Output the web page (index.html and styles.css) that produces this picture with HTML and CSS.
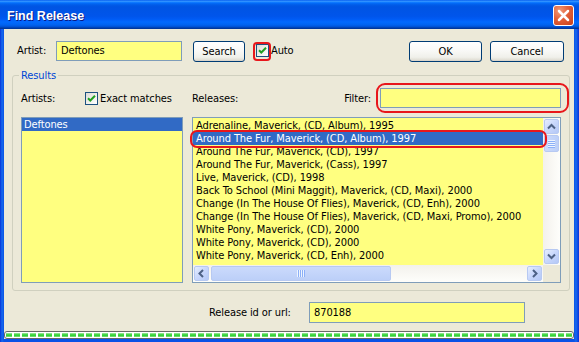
FILE: index.html
```html
<!DOCTYPE html>
<html>
<head>
<meta charset="utf-8">
<title>Find Release</title>
<link rel="stylesheet" href="styles.css">
</head>
<body>
<div class="window">
  <div class="titlebar">
    <span class="title">Find Release</span>
    <span class="close"><svg width="19" height="19" viewBox="0 0 19 19"><path d="M5 5 L14 14 M14 5 L5 14" stroke="#fff" stroke-width="2.5" stroke-linecap="round"/></svg></span>
  </div>
  <div class="client">
    <div class="toprow">
      <span class="lbl lbl-artist">Artist:</span>
      <span class="field field-artist">Deftones</span>
      <span class="btn btn-search">Search</span>
      <span class="auto">
        <span class="chk chk-auto"><svg width="11" height="11" viewBox="0 0 11 11"><path d="M2 5.2 L4.3 7.5 L9 2.8" fill="none" stroke="#21A121" stroke-width="2"/></svg><span class="hl hl-auto"></span></span>
        <span class="auto-text">Auto</span>
      </span>
      <span class="spacer"></span>
      <span class="btn btn-ok">OK</span>
      <span class="btn btn-cancel">Cancel</span>
    </div>

    <div class="group">
      <span class="legend">Results</span>
      <div class="ghead">
        <div class="ghead-left">
          <span class="lbl-artists">Artists:</span>
          <span class="chk"><svg width="11" height="11" viewBox="0 0 11 11"><path d="M2 5.2 L4.3 7.5 L9 2.8" fill="none" stroke="#21A121" stroke-width="2"/></svg></span>
          <span class="exact-text">Exact matches</span>
        </div>
        <div class="ghead-right">
          <span>Releases:</span>
          <span class="spacer"></span>
          <span>Filter:</span>
          <span class="filterwrap"><span class="field field-filter"></span><span class="hl hl-filter"></span></span>
        </div>
      </div>
      <div class="lists">
        <div class="list list-artists">
          <div class="art-row sel">Deftones</div>
        </div>
        <div class="list list-releases">
          <div class="rows">
            <div class="rel-row">Adrenaline, Maverick, (CD, Album), 1995</div>
            <div class="rel-row sel">Around The Fur, Maverick, (CD, Album), 1997<span class="hl hl-row"></span></div>
            <div class="rel-row">Around The Fur, Maverick, (CD), 1997</div>
            <div class="rel-row">Around The Fur, Maverick, (Cass), 1997</div>
            <div class="rel-row">Live, Maverick, (CD), 1998</div>
            <div class="rel-row">Back To School (Mini Maggit), Maverick, (CD, Maxi), 2000</div>
            <div class="rel-row">Change (In The House Of Flies), Maverick, (CD, Enh), 2000</div>
            <div class="rel-row">Change (In The House Of Flies), Maverick, (CD, Maxi, Promo), 2000</div>
            <div class="rel-row">White Pony, Maverick, (CD), 2000</div>
            <div class="rel-row">White Pony, Maverick, (CD), 2000</div>
            <div class="rel-row">White Pony, Maverick, (CD, Enh), 2000</div>
          </div>
          <div class="vscroll">
            <span class="sbtn"><svg width="13" height="13" viewBox="0 0 13 13"><path d="M3 8.5 L6.5 5 L10 8.5" fill="none" stroke="#4D6185" stroke-width="2"/></svg></span>
            <span class="vthumb"><span class="grip-h"></span></span>
            <span class="sbtn sbtn-down"><svg width="13" height="13" viewBox="0 0 13 13"><path d="M3 4.5 L6.5 8 L10 4.5" fill="none" stroke="#4D6185" stroke-width="2"/></svg></span>
          </div>
          <div class="hscroll">
            <span class="sbtn"><svg width="13" height="13" viewBox="0 0 13 13"><path d="M8 3 L4.5 6.5 L8 10" fill="none" stroke="#4D6185" stroke-width="2"/></svg></span>
            <span class="hthumb"><span class="grip-v"></span></span>
            <span class="sbtn sbtn-right"><svg width="13" height="13" viewBox="0 0 13 13"><path d="M5 3 L8.5 6.5 L5 10" fill="none" stroke="#4D6185" stroke-width="2"/></svg></span>
          </div>
          <div class="corner"></div>
        </div>
      </div>
    </div>

    <div class="idrow">
      <span class="lbl-id">Release id or url:</span>
      <span class="field field-id">870188</span>
    </div>
    <div class="progress"><div class="segs"></div></div>
  </div>
</div>
</body>
</html>
```
FILE: styles.css
```css
* { box-sizing: border-box; margin: 0; padding: 0; }
html, body { width: 579px; height: 342px; overflow: hidden; }
body {
  font-family: "DejaVu Sans Condensed", "DejaVu Sans", sans-serif;
  font-stretch: condensed;
  font-size: 11px;
  line-height: 13px;
  letter-spacing: -0.1px;
  color: #000;
  background: #ECE9D8;
}
.window {
  width: 579px;
  height: 342px;
  display: flex;
  flex-direction: column;
  background: linear-gradient(to right, #0831D9 0, #166AEE 2px, #0A52E6 4px, #0A52E6 574px, #166AEE 576px, #0831D9 579px);
}
.titlebar {
  height: 29px;
  flex: none;
  display: flex;
  align-items: flex-start;
  padding: 0 5px 0 7px;
  background: linear-gradient(to bottom, #0058EE 0%, #3593FF 4%, #288EFF 6%, #127DFF 8%, #036FFC 10%, #0262EE 14%, #0057E5 20%, #0054E3 24%, #0055EB 56%, #005BF5 66%, #026AFE 76%, #0062EF 86%, #0052D6 92%, #0040AB 96%, #003092 100%);
}
.title {
  flex: 1;
  margin-top: 8px;
  font-family: "Liberation Sans", Arial, sans-serif;
  font-stretch: normal;
  font-weight: bold;
  font-size: 12.5px;
  line-height: 16px;
  letter-spacing: 0;
  color: #fff;
  text-shadow: 1px 1px 0 #0A1883;
}
.close {
  margin-top: 5px;
  width: 21px;
  height: 21px;
  border: 1px solid #fff;
  border-radius: 3px;
  background: radial-gradient(circle at 30% 25%, #F09A78 0, #E2603A 45%, #C8401A 100%);
  display: flex;
  align-items: center;
  justify-content: center;
}
.client {
  flex: 1;
  margin: 0 5px 3px 4px;
  background: #ECE9D8;
  display: flex;
  flex-direction: column;
  padding-top: 12px;
}
.toprow {
  height: 21px;
  flex: none;
  display: flex;
  align-items: flex-start;
  padding: 0 10px 0 13px;
}
.spacer { flex: 1; }
.lbl-artist { width: 39px; line-height: 20px; }
.field {
  display: block;
  border: 1px solid #7F9DB9;
  background: #FFFF80;
  padding: 0 4px;
  white-space: nowrap;
}
.field-artist { width: 126px; height: 20px; line-height: 18px; }
.btn {
  display: block;
  height: 21px;
  border: 1px solid #003C74;
  border-radius: 3px;
  text-align: center;
  line-height: 19px;
  background: linear-gradient(to bottom, #FFFFFF 0%, #FAFAF8 40%, #F0F0EA 80%, #E3E1D8 92%, #D6D0C5 100%);
}
.btn-search { width: 52px; margin-left: 11px; }
.btn-ok { width: 73px; }
.btn-cancel { width: 74px; margin-left: 8px; }
.auto { display: flex; align-items: flex-start; margin-left: 11px; }
.auto-text { margin-left: 2px; line-height: 20px; }
.chk {
  position: relative;
  display: flex;
  align-items: center;
  justify-content: center;
  width: 13px;
  height: 13px;
  flex: none;
  border: 1px solid #1C5180;
  background: linear-gradient(135deg, #DCDCD7 0%, #F2F2EF 60%, #FFFFFF 100%);
}
.chk-auto { margin-top: 3px; }
.hl {
  position: absolute;
  border: 2px solid #E8161B;
  pointer-events: none;
}
.hl-auto { left: -4px; top: -3px; right: -3px; bottom: -5px; border-radius: 4px; }

.group {
  position: relative;
  flex: none;
  height: 216px;
  margin: 13px 4px 0 8px;
  border: 1px solid #D0D0BF;
  border-radius: 3px;
  padding: 12px 8px 7px 8px;
}
.legend {
  position: absolute;
  left: 6px;
  top: -7px;
  padding: 0 2px;
  background: #ECE9D8;
  color: #0046D5;
}
.ghead {
  display: grid;
  grid-template-columns: 162px 369px;
  column-gap: 9px;
  height: 20px;
}
.ghead-left, .ghead-right { display: flex; align-items: center; }
.lbl-artists { width: 64px; }
.exact-text { margin-left: 2px; }
.filterwrap { position: relative; margin-left: 9px; }
.field-filter { width: 181px; height: 20px; }
.hl-filter { left: -4px; top: -5px; right: -8px; bottom: -5px; border-radius: 9px; }

.lists {
  display: grid;
  grid-template-columns: 162px 369px;
  column-gap: 9px;
  height: 166px;
  margin-top: 9px;
}
.list {
  border: 1px solid #7F9DB9;
  background: #FFFF80;
}
.art-row { height: 13px; padding-left: 2px; white-space: nowrap; }
.sel { background: #316AC5; color: #fff; }
.list-releases {
  display: grid;
  grid-template-columns: 350px 17px;
  grid-template-rows: 147px 17px;
}
.rows { padding-top: 1px; }
.rel-row { position: relative; height: 13px; padding-left: 3px; white-space: nowrap; }
.hl-row { left: -3px; right: -4px; top: -2px; bottom: -3px; border-radius: 7px; z-index: 2; }

.vscroll {
  display: flex;
  flex-direction: column;
  background: linear-gradient(to right, #F3F1EC, #FEFEFB);
}
.hscroll {
  display: flex;
  flex-direction: row;
  background: linear-gradient(to bottom, #F3F1EC, #FEFEFB);
}
.corner { background: #ECE9D8; }
.sbtn {
  display: flex;
  align-items: center;
  justify-content: center;
  width: 15px;
  height: 15px;
  margin: 1px;
  flex: none;
  border: 1px solid #B7C9F2;
  border-radius: 2px;
  background: linear-gradient(135deg, #E6EEFE 0%, #C8D7FC 50%, #B4C8F6 100%);
}
.sbtn-down { margin-top: auto; }
.sbtn-right { margin-left: auto; }
.vthumb, .hthumb {
  display: flex;
  align-items: center;
  justify-content: center;
  flex: none;
  border: 1px solid #B7C9F2;
  border-radius: 2px;
  background: linear-gradient(to right, #CBDAFC, #BCCFF8);
}
.vthumb { width: 15px; height: 17px; margin: 0 1px; }
.hthumb {
  width: 180px;
  height: 15px;
  margin: 1px 0 1px 1px;
  background: linear-gradient(to bottom, #CBDAFC, #BCCFF8);
}
.grip-h {
  width: 7px;
  height: 8px;
  background: repeating-linear-gradient(to bottom, #EEF4FE 0 1px, #8CB0F8 1px 2px);
}
.grip-v {
  width: 8px;
  height: 7px;
  background: repeating-linear-gradient(to right, #EEF4FE 0 1px, #8CB0F8 1px 2px);
}

.idrow {
  display: flex;
  align-items: center;
  flex: none;
  height: 21px;
  margin-top: 11px;
  padding-left: 205px;
}
.lbl-id { width: 100px; }
.field-id { width: 216px; height: 21px; line-height: 19px; }

.progress {
  flex: none;
  height: 8px;
  margin-top: 8px;
  border: 1px solid #686868;
  border-radius: 3px;
  padding: 1px;
  background: #fff;
}
.segs {
  height: 100%;
  background:
    repeating-linear-gradient(to right, transparent 0 6px, #fff 6px 8px),
    linear-gradient(to bottom, #A8ECA8 0%, #37D237 45%, #37D237 65%, #86E386 100%);
}
```
